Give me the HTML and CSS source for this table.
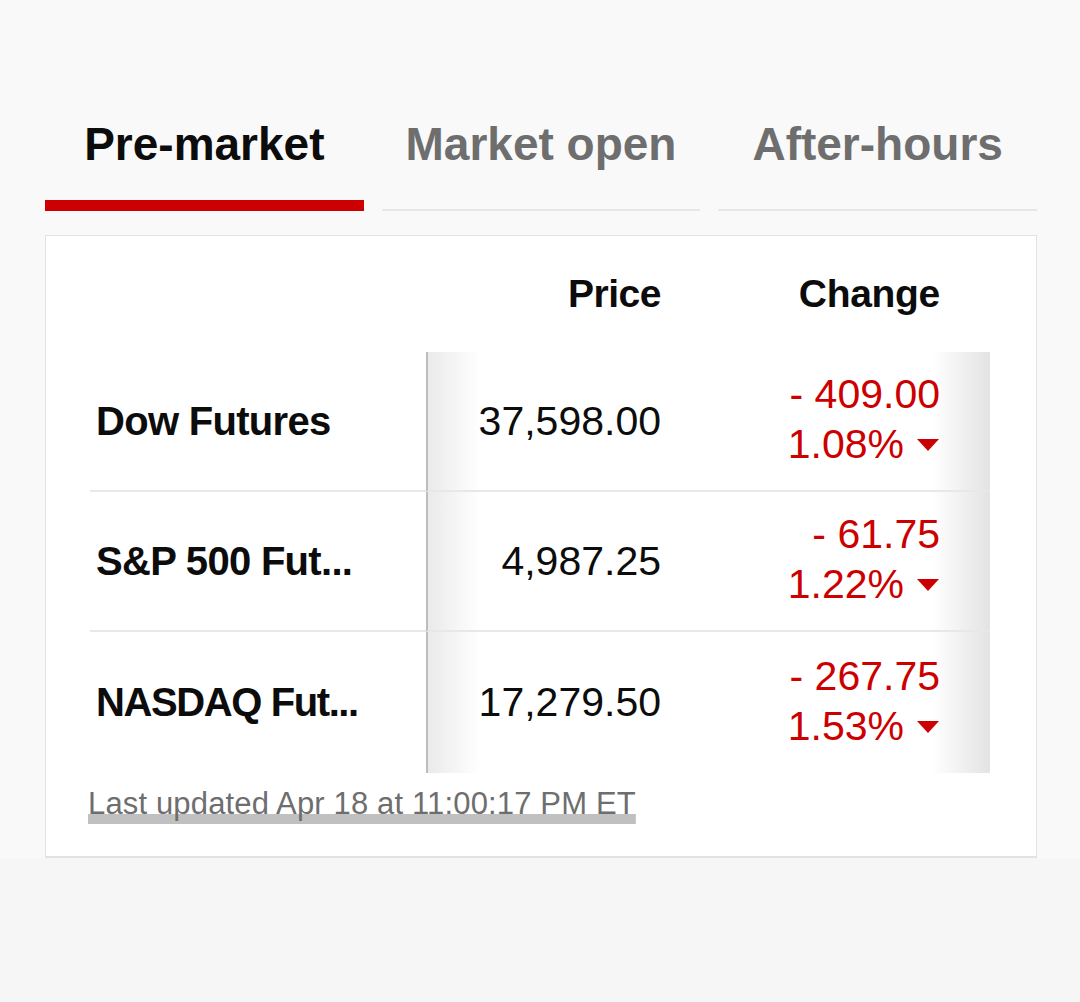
FILE: index.html
```html
<!DOCTYPE html>
<html lang="en">
<head>
<meta charset="utf-8">
<title>Markets</title>
<link rel="stylesheet" href="styles.css">
</head>
<body>
<div class="page">
  <div class="tabs">
    <div class="tab active"><span class="tab-label">Pre-market</span><span class="tab-bar"></span></div>
    <div class="tab"><span class="tab-label">Market open</span><span class="tab-bar"></span></div>
    <div class="tab"><span class="tab-label">After-hours</span><span class="tab-bar"></span></div>
  </div>
  <div class="card">
    <div class="head">
      <div></div>
      <div class="h-price">Price</div>
      <div class="h-change">Change</div>
    </div>
    <div class="row">
      <div class="name">Dow Futures</div>
      <div class="price">37,598.00</div>
      <div class="change">
        <span>- 409.00</span>
        <span class="pct">1.08%<svg class="tri" width="22" height="12" viewBox="0 0 22 12"><polygon points="0,0 22,0 11,12" fill="#cc0000"/></svg></span>
      </div>
    </div>
    <div class="row">
      <div class="name">S&amp;P 500 Fut...</div>
      <div class="price">4,987.25</div>
      <div class="change">
        <span>- 61.75</span>
        <span class="pct">1.22%<svg class="tri" width="22" height="12" viewBox="0 0 22 12"><polygon points="0,0 22,0 11,12" fill="#cc0000"/></svg></span>
      </div>
    </div>
    <div class="row row-last">
      <div class="name name-tight">NASDAQ Fut...</div>
      <div class="price">17,279.50</div>
      <div class="change">
        <span>- 267.75</span>
        <span class="pct">1.53%<svg class="tri" width="22" height="12" viewBox="0 0 22 12"><polygon points="0,0 22,0 11,12" fill="#cc0000"/></svg></span>
      </div>
    </div>
    <div class="updated"><span class="updated-text">Last updated Apr 18 at 11:00:17 PM ET</span></div>
  </div>
</div>
</body>
</html>
```
FILE: styles.css
```css
html, body {
  margin: 0;
  padding: 0;
}
body {
  background: #f6f6f6;
  font-family: "Liberation Sans", Arial, sans-serif;
  color: #0c0c0c;
}
.page {
  background: #f9f9f9;
  padding: 121px 43px 0 45px;
}
.tabs {
  display: grid;
  grid-template-columns: repeat(3, 1fr);
  column-gap: 18px;
}
.tab {
  height: 90px;
  display: flex;
  flex-direction: column;
  align-items: center;
  justify-content: space-between;
}
.tab-label {
  font-weight: 700;
  font-size: 46px;
  line-height: 46px;
  color: #6e6e6e;
}
.tab.active .tab-label {
  color: #0c0c0c;
}
.tab-bar {
  align-self: stretch;
  height: 2px;
  background: #e6e6e6;
}
.tab.active .tab-bar {
  height: 11px;
  background: #cc0000;
}
.card {
  margin-top: 24px;
  background: #fff;
  border: 1px solid #e3e3e3;
  border-bottom-width: 2px;
  padding: 0 46px 34px 44px;
}
.head, .row {
  display: grid;
  grid-template-columns: 336px 274px 290px;
}
.head {
  height: 116px;
  align-items: center;
  font-weight: 700;
  font-size: 39px;
  letter-spacing: -0.3px;
}
.h-price {
  text-align: right;
  padding-right: 39px;
  letter-spacing: -0.5px;
}
.h-change {
  text-align: right;
  padding-right: 50px;
}
.row {
  height: 140px;
}
.row > div {
  box-sizing: border-box;
  border-bottom: 2px solid #e8e8e8;
}
.row.row-last {
  height: 141px;
}
.row.row-last > div {
  border-bottom: 0;
}
.name {
  display: flex;
  align-items: center;
  padding-left: 6px;
  font-weight: 700;
  font-size: 40px;
  letter-spacing: -0.7px;
  white-space: nowrap;
}
.name.name-tight {
  letter-spacing: -1.4px;
}
.price {
  display: flex;
  align-items: center;
  justify-content: flex-end;
  padding-right: 39px;
  font-size: 41px;
  border-left: 2px solid #bdbdbd;
  background: linear-gradient(90deg, #eaeaea 0, #ffffff 52px);
}
.change {
  display: flex;
  flex-direction: column;
  justify-content: center;
  align-items: flex-end;
  padding-right: 50px;
  padding-bottom: 4px;
  font-size: 41px;
  line-height: 50px;
  color: #cc0000;
  background: linear-gradient(270deg, #e3e3e3 0, #ffffff 58px);
}
.pct {
  display: flex;
  align-items: center;
}
.tri {
  margin-left: 13px;
  margin-right: 1px;
  margin-top: 2px;
}
.updated {
  margin-top: 13px;
  margin-left: -2px;
  font-size: 31px;
  line-height: 36px;
  letter-spacing: 0.15px;
  color: #6e6e6e;
}
.updated-text {
  text-decoration: underline;
  text-decoration-color: #c0c0c0;
  text-decoration-thickness: 10px;
  text-underline-offset: 0;
  text-decoration-skip-ink: none;
}
```
